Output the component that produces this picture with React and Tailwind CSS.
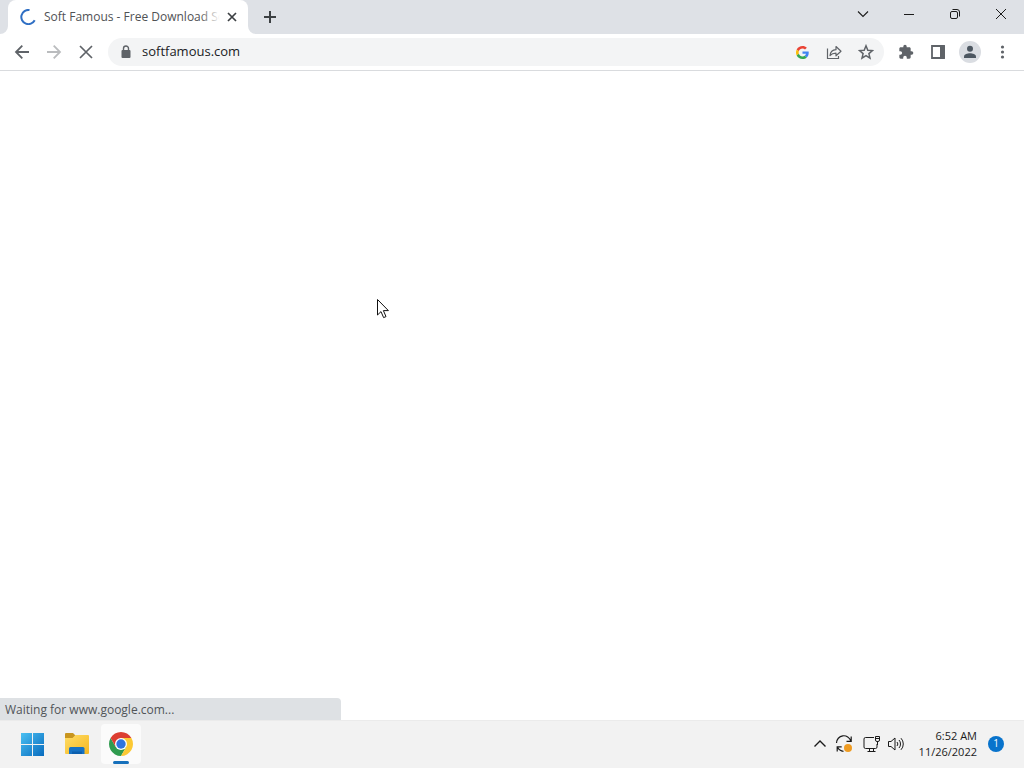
const toolButton = 'flex h-7 w-8 shrink-0 items-center justify-center rounded-full text-[#5f6368]'
const windowButton = 'flex h-7 w-[46px] items-center justify-center text-[#1b1b1b]'
const taskButton = 'relative flex h-10 w-10 items-center justify-center rounded'
const trayButton = 'flex h-10 w-6 items-center justify-center'

function Icon({ size = 16, box = 16, children }) {
  return (
    <svg width={size} height={size} viewBox={`0 0 ${box} ${box}`} fill="none" stroke="currentColor" aria-hidden="true">
      {children}
    </svg>
  )
}

function TabStrip() {
  return (
    <header className="flex h-[34px] items-start justify-between bg-[#dee1e6]">
      <div className="flex h-full items-end">
        <svg width="8" height="8" viewBox="0 0 8 8" aria-hidden="true">
          <path d="M8 0v8H0a8 8 0 0 0 8-8z" fill="#fff" />
        </svg>
        <div className="flex h-full w-60 items-center rounded-t-lg bg-white pr-2 pl-3">
          <svg className="shrink-0" width="16" height="16" viewBox="0 0 16 16" fill="none" aria-hidden="true">
            <path d="M9.500 1A7.100 7.100 0 1 0 14.700 11.300" stroke="#2f6fc4" strokeWidth="2" />
          </svg>
          <div className="relative ml-2 flex-1 overflow-hidden">
            <span className="block w-0 text-xs whitespace-nowrap text-[#505255]">Soft Famous - Free Download So</span>
            <span className="absolute inset-y-0 right-0 w-5 bg-linear-to-r from-white/0 to-white" />
          </div>
          <button type="button" aria-label="Close tab" className="ml-1 flex h-4 w-4 items-center justify-center text-[#3c4043]">
            <Icon>
              <path d="M4 4l8 8M12 4l-8 8" strokeWidth="1.700" />
            </Icon>
          </button>
        </div>
        <svg width="8" height="8" viewBox="0 0 8 8" aria-hidden="true">
          <path d="M0 0v8h8a8 8 0 0 1-8-8z" fill="#fff" />
        </svg>
        <button type="button" aria-label="New tab" className="flex h-full w-7 items-center justify-center text-[#3c4043]">
          <Icon>
            <path d="M8 2v12M2 8h12" strokeWidth="2" />
          </Icon>
        </button>
      </div>

      <div className="flex">
        <button type="button" aria-label="Search tabs" className={windowButton}>
          <Icon>
            <path d="M3 5.500l5 5 5-5" strokeWidth="1.100" />
          </Icon>
        </button>
        <button type="button" aria-label="Minimize" className={windowButton}>
          <Icon>
            <path d="M3 8.500h10" />
          </Icon>
        </button>
        <button type="button" aria-label="Restore" className={windowButton}>
          <Icon>
            <rect x="3.500" y="5.500" width="7" height="7" rx="1.500" />
            <path d="M5.500 3.500h4.500a2.500 2.500 0 0 1 2.500 2.500v4.500" />
          </Icon>
        </button>
        <button type="button" aria-label="Close" className={windowButton}>
          <Icon>
            <path d="M3 3l10 10M13 3L3 13" strokeWidth="1" />
          </Icon>
        </button>
      </div>
    </header>
  )
}

function AddressBar() {
  return (
    <div className="mx-1.5 flex h-7 min-w-0 flex-1 items-center rounded-full bg-[#f3f4f5] pr-0.5 pl-2.5">
      <svg width="16" height="16" viewBox="0 0 16 16" fill="#5f6368" aria-hidden="true">
        <rect x="3.500" y="6" width="9" height="8" rx="1" />
        <path d="M5.500 6.500V4.500a2.500 2.500 0 0 1 5 0v2" fill="none" stroke="#5f6368" strokeWidth="1.400" />
      </svg>
      <input
        type="text"
        aria-label="Address"
        defaultValue="softfamous.com"
        className="ml-2 min-w-0 flex-1 bg-transparent text-[13px] text-[#202124] outline-none"
      />
      <button type="button" aria-label="Google" className={toolButton}>
        <svg width="13" height="13" viewBox="0 0 48 48" aria-hidden="true">
          <path fill="#EA4335" d="M24 9.500c3.540 0 6.710 1.220 9.210 3.600l6.850-6.850C35.900 2.380 30.470 0 24 0 14.620 0 6.510 5.380 2.560 13.220l7.980 6.190C12.430 13.720 17.740 9.500 24 9.500z" />
          <path fill="#4285F4" d="M46.980 24.550c0-1.570-.15-3.090-.38-4.550H24v9.020h12.940c-.58 2.960-2.260 5.480-4.780 7.180l7.730 6c4.510-4.180 7.090-10.360 7.090-17.650z" />
          <path fill="#FBBC05" d="M10.530 28.590c-.48-1.450-.76-2.990-.76-4.590s.27-3.140.76-4.590l-7.980-6.190C.92 16.460 0 20.120 0 24c0 3.880.92 7.540 2.560 10.780l7.970-6.190z" />
          <path fill="#34A853" d="M24 48c6.480 0 11.930-2.130 15.890-5.810l-7.730-6c-2.180 1.480-4.970 2.310-8.160 2.310-6.260 0-11.570-4.220-13.470-9.910l-7.980 6.190C6.510 42.620 14.620 48 24 48z" />
        </svg>
      </button>
      <button type="button" aria-label="Share" className={toolButton}>
        <Icon>
          <path d="M1.500 4.500v10h11v-2.500" strokeWidth="1.200" />
          <path d="M4 11.500c.4-3.800 2.500-5.600 6-5.800V2.500l5 4.700-5 4.600V9.200C7.400 9.200 5.500 9.800 4 11.500z" strokeWidth="1.200" strokeLinejoin="round" />
        </Icon>
      </button>
      <button type="button" aria-label="Bookmark this tab" className={toolButton}>
        <Icon>
          <path d="M8 1.800l1.800 4.400 4.700.4-3.600 3 1.100 4.600L8 11.700l-4 2.500 1.100-4.600-3.600-3 4.700-.4z" strokeWidth="1.500" />
        </Icon>
      </button>
    </div>
  )
}

function Toolbar() {
  return (
    <nav className="flex h-[37px] items-center border-b border-[#d9dbde] bg-white px-1.5">
      <button type="button" aria-label="Back" className={toolButton}>
        <Icon>
          <path d="M15 8H2M8.300 1.700L2 8l6.300 6.300" strokeWidth="1.800" />
        </Icon>
      </button>
      <button type="button" aria-label="Forward" disabled className={toolButton}>
        <svg width="16" height="16" viewBox="0 0 16 16" fill="none" stroke="#babcbe" aria-hidden="true">
          <path d="M1 8h13M7.700 1.700L14 8l-6.300 6.300" strokeWidth="1.800" />
        </svg>
      </button>
      <button type="button" aria-label="Stop loading" className={toolButton}>
        <Icon>
          <path d="M2 2l12 12M14 2L2 14" strokeWidth="1.700" />
        </Icon>
      </button>
      <AddressBar />
      <button type="button" aria-label="Extensions" className={toolButton}>
        <Icon box={24}>
          <path
            fill="currentColor"
            stroke="none"
            d="M20.500 11H19V7c0-1.100-.9-2-2-2h-4V3.500a2.500 2.500 0 0 0-5 0V5H4c-1.100 0-2 .9-2 2v3.800h1.500a2.700 2.700 0 0 1 0 5.400H2V20c0 1.100.9 2 2 2h3.800v-1.500a2.700 2.700 0 0 1 5.400 0V22H17c1.100 0 2-.9 2-2v-4h1.500a2.500 2.500 0 0 0 0-5z"
          />
        </Icon>
      </button>
      <button type="button" aria-label="Side panel" className={toolButton}>
        <Icon>
          <path d="M2 2h12v12H2z" strokeWidth="1.800" />
          <path d="M10 1.500h5v13h-5z" fill="currentColor" stroke="none" />
        </Icon>
      </button>
      <button type="button" aria-label="Profile" className={toolButton}>
        <span className="flex h-[22px] w-[22px] items-center justify-center rounded-full bg-[#dadde2]">
          <Icon>
            <g fill="#4d5761" stroke="none">
              <circle cx="8" cy="4.800" r="3" />
              <path d="M2 14v-1.500C2 10.200 5.500 9.200 8 9.200s6 1 6 3.300V14z" />
            </g>
          </Icon>
        </span>
      </button>
      <button type="button" aria-label="Menu" className={toolButton}>
        <Icon>
          <g fill="currentColor" stroke="none">
            <circle cx="8.500" cy="3" r="1.600" />
            <circle cx="8.500" cy="8" r="1.600" />
            <circle cx="8.500" cy="13" r="1.600" />
          </g>
        </Icon>
      </button>
    </nav>
  )
}

function Taskbar() {
  return (
    <footer className="flex h-12 items-center justify-between border-t border-[#ebebeb] bg-[#f2f2f2] pr-5 pb-0.5 pl-[13px]">
      <div className="flex gap-1">
        <button type="button" aria-label="Start" className={taskButton}>
          <svg width="24" height="24" viewBox="0 0 24 24" aria-hidden="true">
            <defs>
              <linearGradient id="start" gradientUnits="userSpaceOnUse" x1="0" y1="0" x2="24" y2="24">
                <stop stopColor="#4cc2f3" />
                <stop offset="1" stopColor="#0669bd" />
              </linearGradient>
            </defs>
            <path fill="url(#start)" d="M0 1h11v11H0zM12 1h11v11H12zM0 13h11v11H0zM12 13h11v11H12z" />
          </svg>
        </button>
        <button type="button" aria-label="File Explorer" className={taskButton}>
          <svg width="26" height="24" viewBox="0 0 26 24" aria-hidden="true">
            <defs>
              <linearGradient id="folder" x1="0" y1="0" x2="1" y2="1">
                <stop stopColor="#ffdd66" />
                <stop offset="1" stopColor="#f5b721" />
              </linearGradient>
            </defs>
            <path d="M1 2a1 1 0 0 1 1-1h7l2.500 2.500L9 7H1z" fill="#c8951f" />
            <path d="M1 6h7.500l3-3H24a1 1 0 0 1 1 1v17a1 1 0 0 1-1 1H2a1 1 0 0 1-1-1z" fill="url(#folder)" />
            <path d="M5 22v-5.500a1.500 1.500 0 0 1 1.500-1.500h12.500a1.500 1.500 0 0 1 1.500 1.500V22z" fill="#1672c4" />
            <path d="M8 22v-2.500h10V22z" fill="#0c5fae" />
          </svg>
        </button>
        <button type="button" aria-label="Google Chrome" className={`${taskButton} bg-[#fbfbfb]`}>
          <svg width="24" height="24" viewBox="0 0 24 24" aria-hidden="true">
            <path d="M6.800 15L1.610 6A12 12 0 0 0 12 24l5.200-9z" fill="#2f9b4f" />
            <path d="M1.610 6A12 12 0 0 1 22.390 6H12l-5.200 9z" fill="#dc3e31" />
            <path d="M22.390 6A12 12 0 0 1 12 24l5.200-9L12 6z" fill="#fcc934" />
            <circle cx="12" cy="12" r="6" fill="#fff" />
            <circle cx="12" cy="12" r="4.700" fill="#2f74e0" />
          </svg>
          <span className="absolute bottom-0 h-[3px] w-4 rounded-full bg-[#1670bb]" />
        </button>
      </div>

      <div className="flex items-center text-[#1b1b1b]">
        <button type="button" aria-label="Show hidden icons" className={trayButton}>
          <Icon>
            <path d="M2.500 10.500L8 5l5.500 5.500" strokeWidth="1.400" />
          </Icon>
        </button>
        <button type="button" aria-label="Windows Update" className={trayButton}>
          <Icon size={18} box={18}>
            <path d="M1.500 8A7.300 7.300 0 0 1 15.800 6M16.200 1.500v4.800h-4.700M2.200 16.500v-4.700h4.500M2.500 12.300a7.300 7.300 0 0 0 6 4" strokeWidth="1.200" />
            <circle cx="13" cy="13" r="4" fill="#ee9b22" stroke="none" />
          </Icon>
        </button>
        <button type="button" aria-label="Network" className={`ml-1 ${trayButton}`}>
          <Icon size={18} box={18}>
            <path d="M11 2.500H2.500A1.500 1.500 0 0 0 1 4v8a1.500 1.500 0 0 0 1.500 1.500h10A1.500 1.500 0 0 0 14 12V9M4.500 16.500h8M6.500 13.500v3M10.500 13.500v3" />
            <path d="M12.500 1.500h4V5a1.500 1.500 0 0 1-1.500 1.500h-1A1.500 1.500 0 0 1 12.500 5zM12.500 3.500h4M14.500 6.500V10" />
          </Icon>
        </button>
        <button type="button" aria-label="Volume" className={trayButton}>
          <Icon size={18} box={18}>
            <path d="M1.500 6.500h2.500L8 3v12l-4-3.500H1.500z" strokeLinejoin="round" />
            <path d="M10 7a3 3 0 0 1 0 4M12 5a6 6 0 0 1 0 8M14 3.200a8.500 8.500 0 0 1 0 11.600" />
          </Icon>
        </button>
        <button type="button" className="ml-[11px] text-right text-[11px] leading-4">
          <time className="block">6:52 AM</time>
          <time className="block">11/26/2022</time>
        </button>
        <button
          type="button"
          aria-label="1 notification"
          className="ml-[11px] flex h-4 w-4 items-center justify-center rounded-full bg-[#0873cc] text-[10px] text-white"
        >
          1
        </button>
      </div>
    </footer>
  )
}

export default function App() {
  return (
    <div className="flex min-h-screen flex-col bg-white font-['Open_Sans','Noto_Sans',sans-serif]">
      <TabStrip />
      <Toolbar />
      <main className="relative flex-1 bg-white">
        <p
          role="status"
          className="absolute bottom-0 left-0 w-1/3 rounded-tr bg-[#dee1e4] px-[5px] pt-1 pb-0.5 text-xs text-[#505458]"
        >
          Waiting for www.google.com...
        </p>
        {/* mouse pointer */}
        <svg className="absolute top-[228px] left-[377px]" width="13" height="20" viewBox="0 0 13 20" aria-hidden="true">
          <path d="M.5.5v15.500l3.500-3.400 2.600 6 2.400-1-2.600-6h5z" fill="#fff" stroke="#111" />
        </svg>
      </main>
      <Taskbar />
    </div>
  )
}
